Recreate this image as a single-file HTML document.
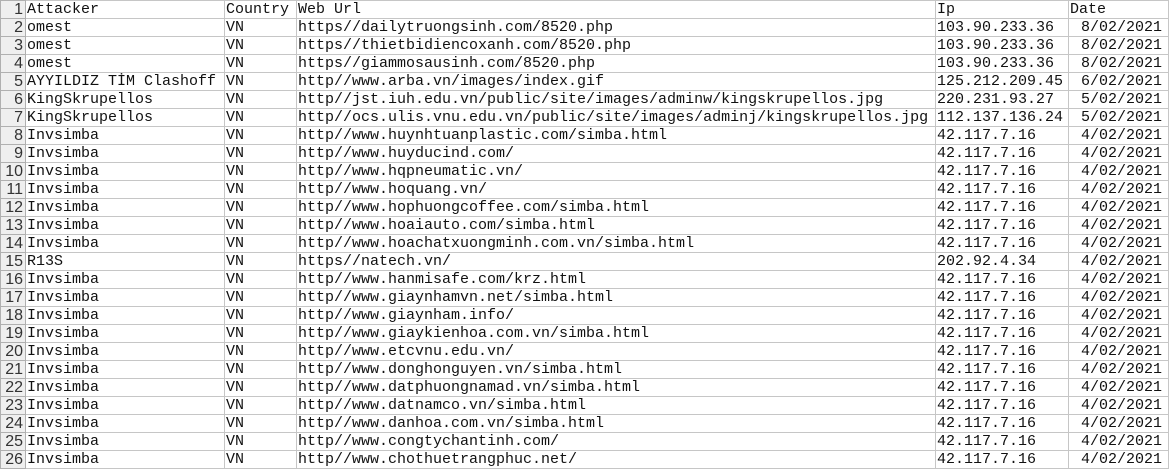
<!DOCTYPE html><html><head><meta charset="utf-8"><style>
body{margin:0;background:#fff;width:1172px;height:470px;overflow:hidden}
table{border-collapse:collapse;table-layout:fixed;position:absolute;left:0;top:0}
td{height:17px;padding:0 0 0 1px;border:1px solid #c6c6c6;font:15px/17px "Liberation Mono",monospace;color:#111;white-space:nowrap;overflow:hidden;vertical-align:bottom}
td.h{background:#efefef;font:16px/17px "Liberation Sans",sans-serif;color:#333;text-align:right;padding:0 2px 0 0;border-color:#b0b0b0}
td.r{text-align:right;padding:0 6px 0 0}
</style></head><body>
<table>
<colgroup><col style="width:25px"><col style="width:199px"><col style="width:72px"><col style="width:639px"><col style="width:133px"><col style="width:100px"></colgroup>
<tr><td class="h">1</td><td>Attacker</td><td>Country</td><td>Web Url</td><td>Ip</td><td>Date</td></tr>
<tr><td class="h">2</td><td>omest</td><td>VN</td><td>https//dailytruongsinh.com/8520.php</td><td>103.90.233.36</td><td class="r">8/02/2021</td></tr>
<tr><td class="h">3</td><td>omest</td><td>VN</td><td>https//thietbidiencoxanh.com/8520.php</td><td>103.90.233.36</td><td class="r">8/02/2021</td></tr>
<tr><td class="h">4</td><td>omest</td><td>VN</td><td>https//giammosausinh.com/8520.php</td><td>103.90.233.36</td><td class="r">8/02/2021</td></tr>
<tr><td class="h">5</td><td>AYYILDIZ TİM Clashoff</td><td>VN</td><td>http//www.arba.vn/images/index.gif</td><td>125.212.209.45</td><td class="r">6/02/2021</td></tr>
<tr><td class="h">6</td><td>KingSkrupellos</td><td>VN</td><td>http//jst.iuh.edu.vn/public/site/images/adminw/kingskrupellos.jpg</td><td>220.231.93.27</td><td class="r">5/02/2021</td></tr>
<tr><td class="h">7</td><td>KingSkrupellos</td><td>VN</td><td>http//ocs.ulis.vnu.edu.vn/public/site/images/adminj/kingskrupellos.jpg</td><td>112.137.136.24</td><td class="r">5/02/2021</td></tr>
<tr><td class="h">8</td><td>Invsimba</td><td>VN</td><td>http//www.huynhtuanplastic.com/simba.html</td><td>42.117.7.16</td><td class="r">4/02/2021</td></tr>
<tr><td class="h">9</td><td>Invsimba</td><td>VN</td><td>http//www.huyducind.com/</td><td>42.117.7.16</td><td class="r">4/02/2021</td></tr>
<tr><td class="h">10</td><td>Invsimba</td><td>VN</td><td>http//www.hqpneumatic.vn/</td><td>42.117.7.16</td><td class="r">4/02/2021</td></tr>
<tr><td class="h">11</td><td>Invsimba</td><td>VN</td><td>http//www.hoquang.vn/</td><td>42.117.7.16</td><td class="r">4/02/2021</td></tr>
<tr><td class="h">12</td><td>Invsimba</td><td>VN</td><td>http//www.hophuongcoffee.com/simba.html</td><td>42.117.7.16</td><td class="r">4/02/2021</td></tr>
<tr><td class="h">13</td><td>Invsimba</td><td>VN</td><td>http//www.hoaiauto.com/simba.html</td><td>42.117.7.16</td><td class="r">4/02/2021</td></tr>
<tr><td class="h">14</td><td>Invsimba</td><td>VN</td><td>http//www.hoachatxuongminh.com.vn/simba.html</td><td>42.117.7.16</td><td class="r">4/02/2021</td></tr>
<tr><td class="h">15</td><td>R13S</td><td>VN</td><td>https//natech.vn/</td><td>202.92.4.34</td><td class="r">4/02/2021</td></tr>
<tr><td class="h">16</td><td>Invsimba</td><td>VN</td><td>http//www.hanmisafe.com/krz.html</td><td>42.117.7.16</td><td class="r">4/02/2021</td></tr>
<tr><td class="h">17</td><td>Invsimba</td><td>VN</td><td>http//www.giaynhamvn.net/simba.html</td><td>42.117.7.16</td><td class="r">4/02/2021</td></tr>
<tr><td class="h">18</td><td>Invsimba</td><td>VN</td><td>http//www.giaynham.info/</td><td>42.117.7.16</td><td class="r">4/02/2021</td></tr>
<tr><td class="h">19</td><td>Invsimba</td><td>VN</td><td>http//www.giaykienhoa.com.vn/simba.html</td><td>42.117.7.16</td><td class="r">4/02/2021</td></tr>
<tr><td class="h">20</td><td>Invsimba</td><td>VN</td><td>http//www.etcvnu.edu.vn/</td><td>42.117.7.16</td><td class="r">4/02/2021</td></tr>
<tr><td class="h">21</td><td>Invsimba</td><td>VN</td><td>http//www.donghonguyen.vn/simba.html</td><td>42.117.7.16</td><td class="r">4/02/2021</td></tr>
<tr><td class="h">22</td><td>Invsimba</td><td>VN</td><td>http//www.datphuongnamad.vn/simba.html</td><td>42.117.7.16</td><td class="r">4/02/2021</td></tr>
<tr><td class="h">23</td><td>Invsimba</td><td>VN</td><td>http//www.datnamco.vn/simba.html</td><td>42.117.7.16</td><td class="r">4/02/2021</td></tr>
<tr><td class="h">24</td><td>Invsimba</td><td>VN</td><td>http//www.danhoa.com.vn/simba.html</td><td>42.117.7.16</td><td class="r">4/02/2021</td></tr>
<tr><td class="h">25</td><td>Invsimba</td><td>VN</td><td>http//www.congtychantinh.com/</td><td>42.117.7.16</td><td class="r">4/02/2021</td></tr>
<tr><td class="h">26</td><td>Invsimba</td><td>VN</td><td>http//www.chothuetrangphuc.net/</td><td>42.117.7.16</td><td class="r">4/02/2021</td></tr>
</table>
</body></html>
